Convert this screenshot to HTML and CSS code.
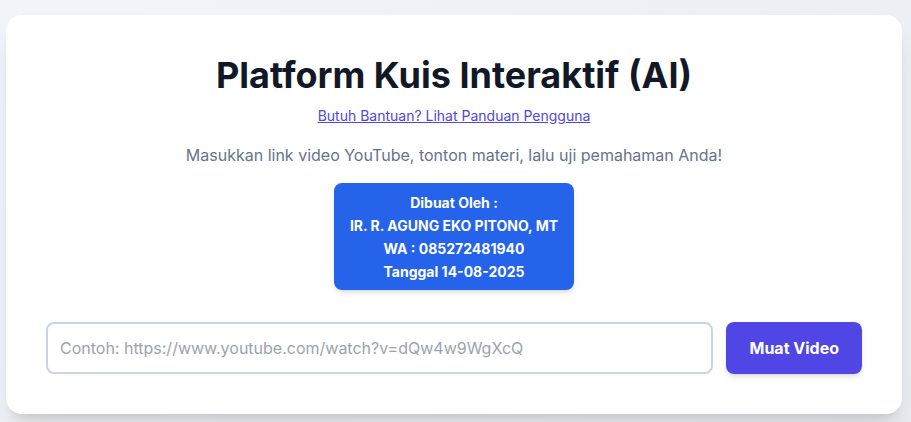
FILE: index.html
```html
<!DOCTYPE html>
<html lang="id">
<head>
<meta charset="utf-8">
<title>Platform Kuis Interaktif (AI)</title>
<link rel="stylesheet" href="styles.css">
</head>
<body>
<main class="card">
  <h1 class="title">Platform Kuis Interaktif (AI)</h1>
  <div class="help"><a href="#" class="help-link">Butuh Bantuan? Lihat Panduan Pengguna</a></div>
  <p class="subtitle">Masukkan link video YouTube, tonton materi, lalu uji pemahaman Anda!</p>
  <div class="credit-wrap">
    <div class="credit">
      <div>Dibuat Oleh :</div>
      <div>IR. R. AGUNG EKO PITONO, MT</div>
      <div>WA : 085272481940</div>
      <div>Tanggal 14-08-2025</div>
    </div>
  </div>
  <form class="load-form" onsubmit="return false">
    <input class="url-input" type="text" placeholder="Contoh: https://www.youtube.com/watch?v=dQw4w9WgXcQ">
    <button class="load-btn" type="submit">Muat Video</button>
  </form>
</main>
</body>
</html>
```

FILE: styles.css
```css
* { box-sizing: border-box; }
html, body { margin: 0; padding: 0; }
body {
  font-family: Inter, "Noto Sans", sans-serif;
  background: linear-gradient(135deg, #f1f4f8 0%, #e9edf2 100%);
  padding: 15px 3px 40px 0;
  min-height: 100vh;
}
.card {
  max-width: 896px;
  margin: 0 auto;
  background: #ffffff;
  border-radius: 16px;
  padding: 40px;
  box-shadow: 0 20px 25px -5px rgba(0,0,0,0.1), 0 8px 10px -6px rgba(0,0,0,0.1);
  text-align: center;
}
.title {
  margin: 0 0 11px;
  font-size: 36px;
  line-height: 40px;
  font-weight: 700;
  color: #111827;
}
.help {
  font-size: 14px;
  line-height: 20px;
}
.help-link {
  color: #4f46e5;
  text-decoration: underline;
}
.subtitle {
  margin: 17px 0 16px;
  font-size: 16px;
  line-height: 24px;
  color: #64748b;
}
.credit-wrap { display: flex; justify-content: center; }
.credit {
  background: #2563eb;
  color: #ffffff;
  font-weight: 700;
  font-size: 14px;
  line-height: 23px;
  padding: 8px 16px 7px;
  border-radius: 8px;
  box-shadow: 0 4px 6px -1px rgba(0,0,0,0.1), 0 2px 4px -2px rgba(0,0,0,0.1);
}
.load-form {
  display: flex;
  gap: 13px;
  margin-top: 32px;
}
.url-input {
  flex: 1;
  height: 52px;
  border: 2px solid #cbd5e1;
  border-radius: 8px;
  padding: 0 12px;
  font-family: inherit;
  font-size: 16px;
  color: #111827;
  outline: none;
}
.url-input::placeholder { color: #9ca3af; }
.load-btn {
  height: 52px;
  padding: 0 23px;
  border: none;
  border-radius: 8px;
  background: #4f46e5;
  color: #ffffff;
  font-family: inherit;
  font-size: 16px;
  font-weight: 700;
  box-shadow: 0 4px 6px -1px rgba(0,0,0,0.1), 0 2px 4px -2px rgba(0,0,0,0.1);
  cursor: pointer;
}
```
